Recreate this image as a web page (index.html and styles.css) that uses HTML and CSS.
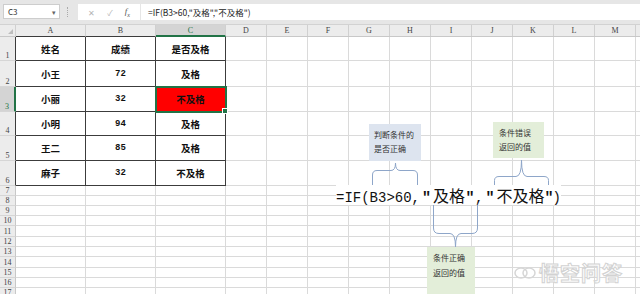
FILE: index.html
```html
<html>
<head>
<meta charset="utf-8">
<link rel="stylesheet" href="styles.css">
</head>
<body>
<div class="app">

<div class="toolbar">
  <div class="namebox">C3<span class="dd">&#9662;</span></div>
  <div class="sep"></div>
  <div class="fxbox"><span>&#10005;</span><span>&#10003;</span><span class="fx">f<sub>x</sub></span></div>
  <div class="formula">=IF(B3&gt;60,"及格","不及格")</div>
</div>

<div class="sheet">
  <div class="row heads">
    <div class="corner"></div>
    <div class="ch tb">A</div><div class="ch tb">B</div><div class="ch tb on">C</div>
    <div class="chrest">
      <span>D</span><span>E</span><span>F</span><span>G</span><span>H</span><span>I</span>
      <span>J</span><span>K</span><span>L</span><span>M</span><span></span>
    </div>
  </div>

  <div class="row h24"><div class="rh tb">1</div><div class="c t">姓名</div><div class="c t">成绩</div><div class="c t">是否及格</div><div class="rest"></div></div>
  <div class="row h26"><div class="rh tb">2</div><div class="c t">小王</div><div class="c t num">72</div><div class="c t">及格</div><div class="rest"></div></div>
  <div class="row h25"><div class="rh tb on">3</div><div class="c t">小丽</div><div class="c t num">32</div><div class="c t sel">不及格</div><div class="rest"></div></div>
  <div class="row h24"><div class="rh tb">4</div><div class="c t">小明</div><div class="c t num">94</div><div class="c t">及格</div><div class="rest"></div></div>
  <div class="row h25"><div class="rh tb">5</div><div class="c t">王二</div><div class="c t num">85</div><div class="c t">及格</div><div class="rest"></div></div>
  <div class="row h25"><div class="rh tb">6</div><div class="c t">麻子</div><div class="c t num">32</div><div class="c t">不及格</div><div class="rest"></div></div>

  <div class="row h10"><div class="rh">7</div><div class="c"></div><div class="c"></div><div class="c"></div><div class="rest"></div></div>
  <div class="row h10"><div class="rh">8</div><div class="c"></div><div class="c"></div><div class="c"></div><div class="rest"></div></div>
  <div class="row h10"><div class="rh">9</div><div class="c"></div><div class="c"></div><div class="c"></div><div class="rest"></div></div>
  <div class="row h10"><div class="rh">10</div><div class="c"></div><div class="c"></div><div class="c"></div><div class="rest"></div></div>
  <div class="row h11"><div class="rh">11</div><div class="c"></div><div class="c"></div><div class="c"></div><div class="rest"></div></div>
  <div class="row h10"><div class="rh">12</div><div class="c"></div><div class="c"></div><div class="c"></div><div class="rest"></div></div>
  <div class="row h10"><div class="rh">13</div><div class="c"></div><div class="c"></div><div class="c"></div><div class="rest"></div></div>
  <div class="row h11"><div class="rh">14</div><div class="c"></div><div class="c"></div><div class="c"></div><div class="rest"></div></div>
  <div class="row h10"><div class="rh">15</div><div class="c"></div><div class="c"></div><div class="c"></div><div class="rest"></div></div>
  <div class="row h10"><div class="rh">16</div><div class="c"></div><div class="c"></div><div class="c"></div><div class="rest"></div></div>
  <div class="row h10"><div class="rh">17</div><div class="c"></div><div class="c"></div><div class="c"></div><div class="rest"></div></div>
</div>

<!-- annotations drawn over the sheet -->
<svg class="braces" width="640" height="294" viewBox="0 0 640 294">
  <path d="M372.5 186 V175 Q372.5 170.5 377 170.5 H391 Q395.5 170.5 395.5 163 Q395.5 170.5 400 170.5 H413 Q417.5 170.5 417.5 175 V186"/>
  <path d="M494.5 186 V180.5 Q494.5 176.5 499 176.5 H516 Q521.5 176.5 521.5 160 Q521.5 176.5 527 176.5 H544 Q548.5 176.5 548.5 180.5 V186"/>
  <path d="M433.5 201 V228 Q433.5 233.5 439 233.5 H450 Q455.5 233.5 455.5 247 Q455.5 233.5 461 233.5 H472 Q477.5 233.5 477.5 228 V201"/>
</svg>

<div class="note blue n1">判断条件的<br>是否正确</div>
<div class="note green n2">条件错误<br>返回的值</div>
<div class="note green n3">条件正确<br>返回的值</div>

<div class="bigf"><span class="mono">=IF(B3&gt;60,</span><span class="q q1">"</span><span class="cj">及格</span><span class="q q2">"</span><span class="mono">,</span><span class="q q1">"</span><span class="cj">不及格</span><span class="q q3">"</span><span class="mono">)</span></div>

<div class="mark">
  <svg width="22" height="14" viewBox="0 0 22 14">
    <ellipse cx="7" cy="7" rx="6" ry="5"/>
    <ellipse cx="15" cy="7" rx="6" ry="5"/>
  </svg>
  <span>悟空问答</span>
</div>

</div>
</body>
</html>
```

FILE: styles.css
```css
* {box-sizing: border-box;}
body {margin: 0; background: #fff; color: #222; font-family: "Noto Sans CJK SC", "Noto Sans", sans-serif;}
.app {position: relative; width: 640px; height: 294px; overflow: hidden;}

/* formula bar */
.toolbar {height: 25px; background: #e6e6e6; display: flex; align-items: flex-start; padding: 4px 0 0 3px; border-bottom: 1px solid #d2d2d2;}
.namebox {width: 57px; height: 15px; background: #fff; border: 1px solid #cdcdcd; display: flex; align-items: center; justify-content: space-between; padding: 0 3px 0 4px; font-size: 8px; color: #333;}
.dd {font-size: 7px; color: #666;}
.sep {width: 1px; height: 10px; margin: 3px 10px 0 7px; border-left: 1px dotted #aaa;}
.fxbox {width: 62px; height: 16px; background: #fff; display: flex; align-items: center; justify-content: space-around; padding: 0 4px; color: #b4b4b4; font-size: 8px;}
.fx {color: #555; font-family: "Liberation Serif", serif; font-style: italic; font-size: 9px;}
.fx sub {font-size: 6px;}
.formula {flex: 1; height: 16px; background: #fff; margin-left: 1px; padding-left: 7px; font-size: 8.5px; line-height: 16px; color: #222;}

/* sheet */
.row {display: grid; grid-template-columns: 16px 70px 70px 70px 1fr;}
.heads {height: 12px;}
.h24 {height: 24px;}
.h25 {height: 25px;}
.h26 {height: 26px;}
.h10 {height: 10px;}
.h11 {height: 11px;}

.corner {background: #ececec; border-right: 1px solid #d0d0d0; border-bottom: 1px solid #c8c8c8; position: relative;}
.corner::after {content: ""; position: absolute; right: 2px; bottom: 2px; border-left: 5px solid transparent; border-bottom: 5px solid #bdbdbd;}
.ch {background: #ececec; border-right: 1px solid #d0d0d0; border-bottom: 1px solid #c8c8c8; font-family: "Liberation Serif", serif; font-size: 8px; color: #444; display: flex; align-items: center; justify-content: center;}
.ch.tb {border-bottom-color: #3c3c3c;}
.ch.on {background: #d4d4d4; border-bottom: 2px solid #217346; color: #217346;}
.chrest {display: flex; background: #ececec; border-bottom: 1px solid #c8c8c8;}
.chrest span {flex: 0 0 41px; border-right: 1px solid #d0d0d0; font-family: "Liberation Serif", serif; font-size: 8px; color: #444; display: flex; align-items: center; justify-content: center;}

.rh {background: #ececec; border-right: 1px solid #c8c8c8; border-bottom: 1px solid #d6d6d6; font-family: "Liberation Serif", serif; font-size: 8px; line-height: 8px; color: #444; display: flex; align-items: flex-end; justify-content: center;}
.rh.tb {border-right-color: #3c3c3c;}
.rh.on {background: #d4d4d4; border-right: 2px solid #217346; color: #217346;}

.c {border-right: 1px solid #dadada; border-bottom: 1px solid #dadada; display: flex; align-items: center; justify-content: center; font-size: 9.5px; font-weight: 700; color: #111;}
.c.t {border-right-color: #3c3c3c; border-bottom-color: #3c3c3c;}
.num {font-family: "Liberation Mono", monospace; font-size: 9px;}
.sel {background: #ff0000; outline: 2px solid #217346; outline-offset: -1px; position: relative;}
.sel::after {content: ""; position: absolute; right: -3px; bottom: -3px; width: 4px; height: 4px; background: #217346; border: 1px solid #fff;}
.rest {border-bottom: 1px solid #dadada; background-image: repeating-linear-gradient(to right, transparent 0 40px, #dadada 40px 41px);}

/* annotations */
.braces {position: absolute; left: 0; top: 0;}
.braces path {fill: none; stroke: #8ea6c9; stroke-width: 1;}
.note {position: absolute; font-size: 8px; line-height: 14px; color: #333;}
.blue {background: #dde4ef;}
.green {background: #e3eed9;}
.n1 {left: 369px; top: 124px; width: 52px; height: 37px; padding: 4px 0 0 5px;}
.n2 {left: 493px; top: 122px; width: 51px; height: 36px; padding: 4px 0 0 6px;}
.n3 {left: 427px; top: 247px; width: 48px; height: 47px; padding: 3px 0 0 6px; line-height: 15px;}

.bigf {position: absolute; left: 336px; top: 185px; height: 20px; line-height: 20px; white-space: nowrap; color: #111; background: #fff; display: flex; align-items: baseline;}
.mono {font-family: "Liberation Mono", monospace; font-size: 14px;}
.cj {font-family: "Noto Sans CJK SC", sans-serif; font-size: 16px;}
.q {display: inline-block; text-align: center; font-family: "Liberation Mono", monospace; font-size: 15px; font-weight: 700;}
.q1 {width: 13px;}
.q2 {width: 10px;}
.q3 {width: 8px;}

.mark {position: absolute; left: 514px; top: 258px; display: flex; align-items: center; gap: 3px;}
.mark svg ellipse {fill: none; stroke: #d6d6d6; stroke-width: 1.5;}
.mark span {font-size: 20px; font-weight: 700; color: #fff; -webkit-text-stroke: 1px #d2d2d2; letter-spacing: 1px;}
```
